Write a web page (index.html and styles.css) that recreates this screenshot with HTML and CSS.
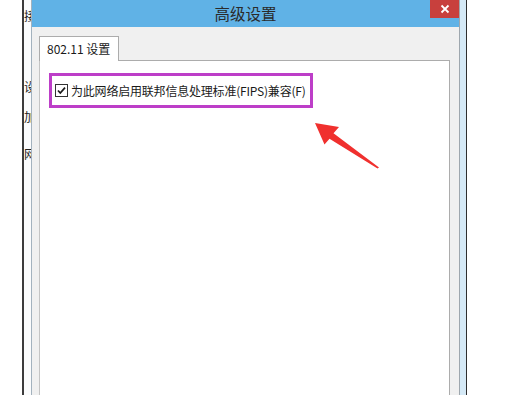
FILE: index.html
```html
<!DOCTYPE html>
<html>
<head>
<meta charset="utf-8">
<link rel="stylesheet" href="styles.css">
</head>
<body>
<div class="desk">
  <div class="gutter"></div>
  <div class="behind">
    <span class="bc c1">接</span>
    <span class="bc c2">设</span>
    <span class="bc c3">加</span>
    <span class="bc c4">网</span>
  </div>
  <div class="window">
    <div class="titlebar">
      <span class="title">高级设置</span>
      <div class="close">
        <svg width="10" height="10" viewBox="0 0 10 10"><path d="M1.5 1.5 L8.5 8.5 M8.5 1.5 L1.5 8.5" stroke="#fff" stroke-width="1.8" fill="none"/></svg>
      </div>
    </div>
    <div class="client">
      <div class="tabs"><div class="tab">802.11 设置</div></div>
      <div class="panel">
        <div class="highlight">
          <span class="cb"><svg width="13" height="13" viewBox="0 0 13 13"><rect x="0.5" y="0.5" width="12" height="12" fill="#fff" stroke="#333"/><path d="M3 6.5 L5.3 9 L10 3.6" stroke="#1a1a1a" stroke-width="1.7" fill="none"/></svg></span>
          <span class="label">为此网络启用联邦信息处理标准(FIPS)兼容(F)</span>
        </div>
      </div>
    </div>
  </div>
  <div class="rframe"></div>
  <div class="rest"></div>
</div>
<svg class="arrow" width="520" height="395" viewBox="0 0 520 395">
  <polygon points="315,123 339,127 333.5,133.2 379,167.5 377.5,168.5 329.5,138.8 324.5,144.5" fill="#f0302e"/>
</svg>
</body>
</html>
```
FILE: styles.css
```css
html, body {
  margin: 0;
  padding: 0;
  background: #fff;
}
body {
  width: 520px;
  height: 395px;
  overflow: hidden;
  position: relative;
  font-family: "Noto Sans CJK SC", "Noto Sans", sans-serif;
  color: #1a1a1a;
}
.desk {
  display: flex;
  height: 395px;
}
.gutter {
  width: 22px;
  background: #fff;
}
.behind {
  width: 7px;
  border-left: 2px solid #3c3c3c;
  background: #fbfcfd;
  overflow: hidden;
  display: flex;
  flex-direction: column;
  font-size: 12px;
  line-height: 12px;
  color: #222;
}
.bc {
  display: block;
  white-space: nowrap;
}
.c1 { margin-top: 10px; }
.c2 { margin-top: 59px; }
.c3 { margin-top: 18px; }
.c4 { margin-top: 25px; }
.window {
  width: 429px;
  box-sizing: border-box;
  border-left: 1px solid #a3b2be;
  border-right: 1px solid #9ea7ae;
  display: flex;
  flex-direction: column;
}
.titlebar {
  height: 27px;
  background: #60b2e6;
  display: grid;
  grid-template-columns: 1fr auto 1fr;
}
.title {
  grid-column: 2;
  font-size: 15.5px;
  line-height: 26px;
  color: #2a2a2a;
}
.close {
  grid-column: 3;
  justify-self: end;
  align-self: start;
  width: 29px;
  height: 18px;
  background: #c8403d;
  display: flex;
  align-items: center;
  justify-content: center;
}
.close svg { display: block; }
.client {
  flex: 1;
  background: #f0f0f0;
  padding: 9px 9px 0 7px;
  display: flex;
  flex-direction: column;
}
.tabs {
  display: flex;
}
.tab {
  position: relative;
  z-index: 1;
  width: 80px;
  height: 25px;
  box-sizing: border-box;
  border: 1px solid #acacac;
  border-bottom: none;
  background: #fff;
  margin-bottom: -1px;
  padding-left: 7px;
  font-size: 12px;
  line-height: 23px;
  white-space: nowrap;
}
.panel {
  flex: 1;
  background: #fff;
  border: 1px solid #acacac;
  border-left-color: #c4c4c4;
  border-bottom: none;
  padding: 12px 0 0 9px;
}
.highlight {
  width: 264px;
  height: 35px;
  box-sizing: border-box;
  border: 3px solid #bd3ec8;
  display: flex;
  align-items: center;
  padding-left: 3px;
  gap: 3px;
}
.cb svg { display: block; }
.label {
  font-size: 12px;
  line-height: 16px;
  letter-spacing: -0.2px;
  white-space: nowrap;
  color: #1a1a1a;
}
.rframe {
  width: 6px;
  background: #d5e9f6;
  border-right: 1px solid #2e2e2e;
}
.rest {
  flex: 1;
  background: #fff;
}
.arrow {
  position: absolute;
  left: 0;
  top: 0;
  pointer-events: none;
}
```
